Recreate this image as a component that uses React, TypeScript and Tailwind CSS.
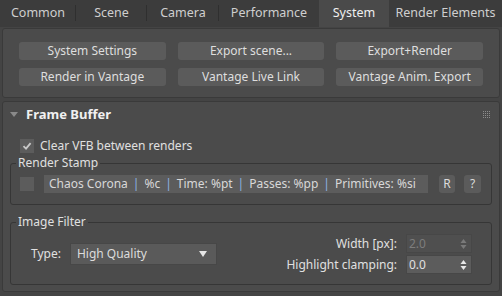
import React from 'react';

const tabs = [
  { label: 'Common', w: 'w-[76px]' },
  { label: 'Scene', w: 'w-[71px]' },
  { label: 'Camera', w: 'w-[72px]' },
  { label: 'Performance', w: 'w-[100px]' },
  { label: 'System', w: 'w-[70px]', active: true },
  { label: 'Render Elements', w: 'w-[113px]' },
];

const buttons = [
  'System Settings',
  'Export scene...',
  'Export+Render',
  'Render in Vantage',
  'Vantage Live Link',
  'Vantage Anim. Export',
];

const CheckBox = ({ checked }: { checked?: boolean }) => (
  <div className="w-[14px] h-[14px] bg-[#5c5c5c] flex items-center justify-center shrink-0">
    {checked && (
      <svg width="10" height="10" viewBox="0 0 10 10">
        <path d="M1.5 5.2 L4 7.6 L8.6 2.2" fill="none" stroke="#c8c8c8" strokeWidth="1.8" />
      </svg>
    )}
  </div>
);

const Spinner = ({ value, disabled }: { value: string; disabled?: boolean }) => (
  <div
    className={`w-[66px] h-[19px] flex items-center justify-between pl-[2px] pr-[4px] border border-[#474747] ${
      disabled ? 'bg-[#4f4f4f] text-[#7d7d7d]' : 'bg-[#5c5c5c] text-[#e0e0e0]'
    }`}
  >
    <span>{value}</span>
    <svg width="7" height="12" viewBox="0 0 7 12">
      <path d="M3.5 1 L6.5 5 L0.5 5 Z" fill={disabled ? '#7a7a7a' : '#e8e8e8'} />
      <path d="M3.5 11 L6.5 7 L0.5 7 Z" fill={disabled ? '#7a7a7a' : '#e8e8e8'} />
    </svg>
  </div>
);

const GroupBox = ({ title, className, children }: { title: string; className: string; children: React.ReactNode }) => (
  <div className={`relative mx-[7px] border border-[#363636] rounded-[3px] ${className}`}>
    <div className="absolute -top-[9px] left-[5px] px-[2px] bg-[#4b4b4b] text-[#e0e0e0] leading-[16px]">{title}</div>
    {children}
  </div>
);

const Sep = () => <span className="text-[#8db4e2] mx-[5px]">|</span>;

export default function App() {
  return (
    <div
      className="w-[502px] h-[296px] bg-[#444444] text-[12px] text-[#dcdcdc] overflow-hidden"
      style={{ fontFamily: '"Noto Sans", "Liberation Sans", sans-serif' }}
    >
      <div className="h-[27px] flex bg-[#3c3c3c]">
        {tabs.map((t, i) => (
          <div key={t.label} className={`${t.w} relative flex items-center justify-center shrink-0 ${t.active ? 'bg-[#4a4a4a] text-[#f0f0f0]' : 'text-[#cfcfcf]'}`}>
            <span className="text-[12.5px]">{t.label}</span>
            {i < 3 && <div className="absolute right-0 top-[5px] h-[16px] w-px bg-[#2f2f2f]" />}
          </div>
        ))}
      </div>

      <div className="mx-[2px] mt-[1px] bg-[#4b4b4b] border border-[#3a3a3a] rounded-[3px] px-[16px] pt-[13px] pb-[11px] grid grid-cols-3 gap-x-[12px] gap-y-[8px]">
        {buttons.map((b) => (
          <div key={b} className="h-[18px] bg-[#5b5b5b] rounded-[3px] flex items-center justify-center text-[#dedede]">
            {b}
          </div>
        ))}
      </div>

      <div className="mx-[2px] mt-[3px] h-[191px] bg-[#4b4b4b] border border-[#3a3a3a] rounded-[3px] flex flex-col">
        <div className="h-[26px] flex items-center pl-[7px] pr-[8px]">
          <svg width="8" height="6" viewBox="0 0 8 6" className="mr-[8px]">
            <path d="M0 0 L8 0 L4 5 Z" fill="#8a8a8a" />
          </svg>
          <span className="font-bold text-[13px] text-[#f0f0f0]">Frame Buffer</span>
          <svg width="8" height="8" viewBox="0 0 8 8" className="ml-auto">
            {[0, 1, 2, 3].map((r) =>
              [0, 1, 2, 3].map((c) => <rect key={`${r}-${c}`} x={c * 2} y={r * 2} width="1" height="1" fill="#8c8c8c" />)
            )}
          </svg>
        </div>

        <div className="h-[18px] mt-[9px] flex items-center gap-[6px] pl-[17px]">
          <CheckBox checked />
          <span className="text-[#e0e0e0]">Clear VFB between renders</span>
        </div>

        <GroupBox title="Render Stamp" className="mt-[8px] h-[42px] flex items-center pl-[9px] pr-[7px]">
          <CheckBox />
          <div className="ml-[10px] w-[384px] h-[18px] bg-[#5c5c5c] flex items-center pl-[5px] text-[#d8d8d8] whitespace-nowrap overflow-hidden">
            <span>Chaos Corona</span>
            <Sep />
            <span>%c</span>
            <Sep />
            <span>Time: %pt</span>
            <Sep />
            <span>Passes: %pp</span>
            <Sep />
            <span>Primitives: %si</span>
          </div>
          <div className="ml-[11px] w-[16px] h-[18px] bg-[#5b5b5b] rounded-[3px] flex items-center justify-center">R</div>
          <div className="ml-[9px] w-[17px] h-[18px] bg-[#5b5b5b] rounded-[3px] flex items-center justify-center">?</div>
        </GroupBox>

        <GroupBox title="Image Filter" className="mt-[17px] h-[63px] flex items-center pl-[20px] pr-[19px]">
          <span className="text-[#e0e0e0]">Type:</span>
          <div className="ml-[9px] w-[147px] h-[22px] bg-[#5a5a5a] border border-[#474747] flex items-center pl-[6px] pr-[9px]">
            <span>High Quality</span>
            <svg width="8" height="6" viewBox="0 0 8 6" className="ml-auto">
              <path d="M0 0 L8 0 L4 6 Z" fill="#e6e6e6" />
            </svg>
          </div>
          <div className="ml-auto grid grid-cols-[auto_auto] gap-x-[9px] gap-y-[2px] items-center mt-[1px]">
            <span className="text-right text-[#e0e0e0]">Width [px]:</span>
            <Spinner value="2.0" disabled />
            <span className="text-right text-[#e0e0e0]">Highlight clamping:</span>
            <Spinner value="0.0" />
          </div>
        </GroupBox>
      </div>
    </div>
  );
}
